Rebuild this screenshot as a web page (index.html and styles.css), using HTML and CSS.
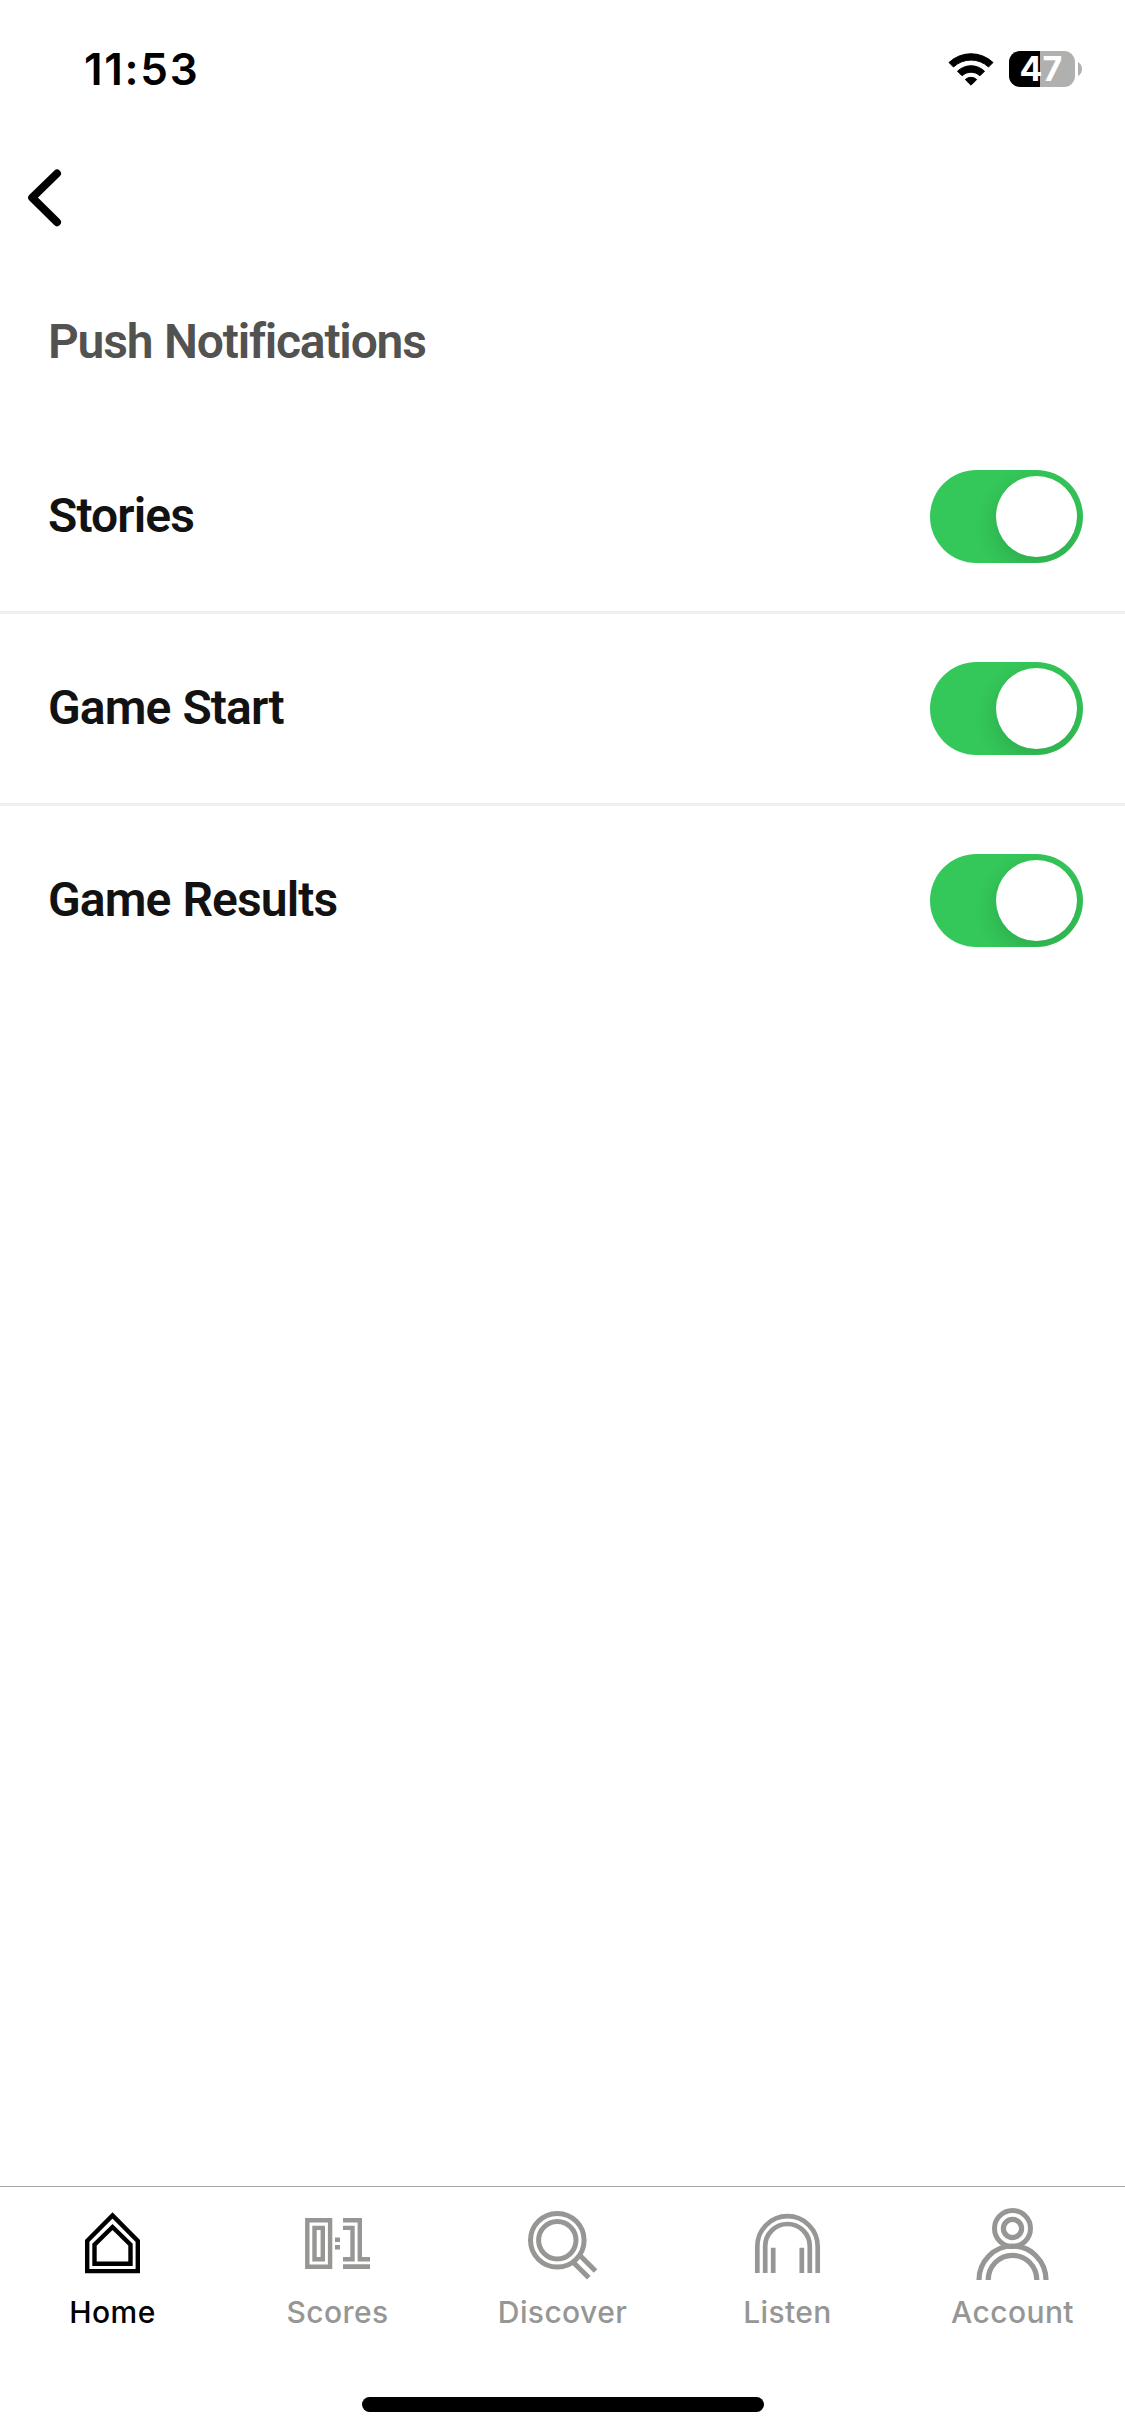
FILE: index.html
```html
<!DOCTYPE html>
<html lang="en">
<head>
<meta charset="utf-8">
<title>Push Notifications</title>
<link rel="stylesheet" href="styles.css">
</head>
<body>
<div class="screen">
  <header class="status">
    <span class="time">11:53</span>
    <div class="indicators">
      <svg class="wifi" viewBox="0 0 48 36" aria-label="Wi-Fi">
        <path d="M2 11.500A32 32 0 0 1 46 11.500L41.500 16A25.500 25.500 0 0 0 6.500 16Z" stroke="#000" stroke-width="1" stroke-linejoin="round"/>
        <path d="M10.500 20.200A19.500 19.500 0 0 1 37.500 20.200L33 24.700A13.200 13.200 0 0 0 15 24.700Z" stroke="#000" stroke-width="1" stroke-linejoin="round"/>
        <path d="M18.300 28.500A8.600 8.600 0 0 1 29.700 28.500L24 34.200Z" stroke="#000" stroke-width="1" stroke-linejoin="round"/>
      </svg>
      <div class="battery"><span class="level">47</span></div>
      <svg class="nub" viewBox="0 0 4 14"><path d="M0 0Q4 2.500 4 7T0 14Z" fill="#b0b0b0"/></svg>
    </div>
  </header>
  <nav class="topbar">
    <svg class="back" viewBox="0 0 40 64" aria-label="Back"><path d="M33 7.500L8.200 31.700L33 56.200" fill="none" stroke="#000" stroke-width="8" stroke-linecap="round" stroke-linejoin="round"/></svg>
  </nav>
  <main class="content">
    <h1 class="title">Push Notifications</h1>
    <ul class="settings">
      <li class="row"><span class="label">Stories</span><span class="toggle"><span class="thumb"></span></span></li>
      <li class="row"><span class="label">Game Start</span><span class="toggle"><span class="thumb"></span></span></li>
      <li class="row"><span class="label">Game Results</span><span class="toggle"><span class="thumb"></span></span></li>
    </ul>
  </main>
  <nav class="tabs">
    <a class="tab active">
      <svg class="icon" viewBox="-38.5 0 77 80"><path d="M-25.300 66.100V36L0 10.400L25.300 36V66.100Z M-18 58.800V39.700L0 22L18 39.700V58.800Z" stroke-width="4.400"/></svg>
      <span class="name">Home</span>
    </a>
    <a class="tab">
      <svg class="icon" viewBox="-38.5 0 77 80">
        <path d="M-30.200 15.200H-7.400V61.700H-30.200Z M-23 22.900H-14.700V54.200H-23Z" stroke-width="4.400"/>
        <path class="solid" d="M-2.500 32.500H2.500V37H-2.500Z M-2.500 40H2.500V44.600H-2.500Z M5.500 59.300H32.500V64H5.500Z"/>
        <path d="M5.500 15.200H22.300V54.200H32.500 M5.500 22.900H15V54.200H5.500" stroke-width="4.400"/>
      </svg>
      <span class="name">Scores</span>
    </a>
    <a class="tab">
      <svg class="icon" viewBox="-38.5 0 77 80">
        <circle cx="-5.200" cy="35.200" r="26.800" stroke-width="5"/>
        <circle cx="-5.200" cy="35.200" r="18.700" stroke-width="5"/>
        <path d="M10.500 57L26.300 72.700 M17.500 50.500L33 66" stroke-width="5"/>
      </svg>
      <span class="name">Discover</span>
    </a>
    <a class="tab">
      <svg class="icon" viewBox="-38.5 0 77 80"><path d="M-30.200 68V41.400A30.200 30.200 0 0 1 30.200 41.400V68 M-22.300 68V41.300A22.300 22.300 0 0 1 22.300 41.300V68 M-14.300 68V42.700 M14.300 68V42.700" stroke-width="4.700"/></svg>
      <span class="name">Listen</span>
    </a>
    <a class="tab">
      <svg class="icon" viewBox="-38.5 0 77 80">
        <circle cx="0" cy="23.500" r="18" stroke-width="5"/>
        <circle cx="0" cy="23.500" r="9.100" stroke-width="5.200"/>
        <path d="M-33.500 75A33.500 34 0 0 1 33.500 75 M-24.300 75A24.300 24.700 0 0 1 24.300 75" stroke-width="5.200"/>
      </svg>
      <span class="name">Account</span>
    </a>
  </nav>
  <footer class="footer"><span class="home-indicator"></span></footer>
</div>
</body>
</html>
```

FILE: styles.css
```css
* { box-sizing: border-box; }
body { margin: 0; background: #fff; font-family: Inter, "Liberation Sans", sans-serif; }
.screen { width: 1125px; height: 2436px; display: flex; flex-direction: column; background: #fff; overflow: hidden; }
.status { height: 138px; padding: 0 43px 0 84px; display: flex; justify-content: space-between; align-items: center; }
.time { font-size: 44px; font-weight: 600; line-height: 54px; letter-spacing: 1.7px; }
.indicators { display: flex; align-items: center; }
.wifi { width: 48px; height: 36px; margin-right: 14px; }
.battery { width: 66px; height: 36px; border-radius: 11px; background: linear-gradient(to right, #000 31px, #b0b0b0 31px); display: flex; justify-content: center; align-items: center; }
.level { color: #fff; font-size: 34px; line-height: 36px; font-weight: 700; letter-spacing: 0; padding-right: 2px; }
.nub { width: 4px; height: 14px; margin-left: 3px; }
.topbar { height: 120px; padding: 28px 0 0 24px; }
.back { display: block; width: 40px; height: 64px; }
.content { flex: 1; font-family: Roboto, "Liberation Sans", sans-serif; }
.title { margin: 0; height: 164px; padding: 56px 0 0 48px; font-size: 48px; line-height: 56px; font-weight: 580; color: #525250; letter-spacing: -1.2px; word-spacing: 1px; }
.settings { list-style: none; margin: 0; padding: 0; }
.row { height: 192px; padding: 0 42px 0 48px; display: flex; align-items: center; justify-content: space-between; border-bottom: 3px solid #efefef; }
.row:last-child { border-bottom-color: transparent; }
.label { font-size: 48px; line-height: 56px; font-weight: 580; color: #121212; letter-spacing: -0.9px; word-spacing: 1px; padding-bottom: 1px; }
.toggle { width: 153px; height: 93px; padding: 6px; border-radius: 47px; background: #34c759; display: flex; justify-content: flex-end; overflow: hidden; }
.thumb { width: 81px; height: 81px; border-radius: 50%; background: #fff; box-shadow: 0 8px 22px rgba(0, 0, 0, 0.15); }
.tabs { height: 170px; border-top: 1px solid #a7a7a7; display: flex; }
.tab { flex: 1; padding-top: 18px; display: flex; flex-direction: column; align-items: center; color: #969694; }
.tab.active { color: #000; }
.icon { width: 77px; height: 80px; fill: none; stroke: currentColor; }
.icon .solid { fill: currentColor; stroke: none; }
.name { margin-top: 9px; font-size: 30px; line-height: 36px; font-weight: 450; letter-spacing: 0.4px; white-space: nowrap; }
.footer { height: 80px; padding-top: 41px; display: flex; justify-content: center; }
.home-indicator { width: 402px; height: 15px; border-radius: 8px; background: #000; }
```
